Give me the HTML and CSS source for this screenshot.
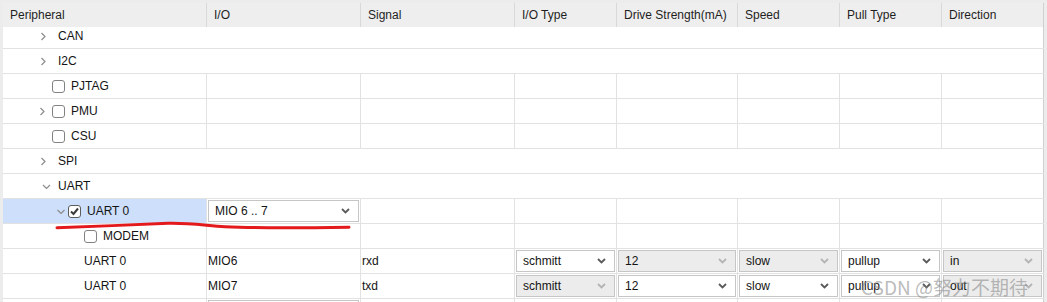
FILE: index.html
```html
<!DOCTYPE html>
<html lang="en">
<head>
  <meta charset="UTF-8">
  <title>Peripheral I/O</title>
  <link rel="stylesheet" href="styles.css">
</head>
<body>
  <div class="view">
    <div class="grid">
      <div class="row head">
        <div class="cell">Peripheral</div>
        <div class="cell">I/O</div>
        <div class="cell">Signal</div>
        <div class="cell">I/O Type</div>
        <div class="cell">Drive Strength(mA)</div>
        <div class="cell">Speed</div>
        <div class="cell">Pull Type</div>
        <div class="cell">Direction</div>
      </div>

      <div class="body">
        <div class="scroll">
          <div class="row group">
            <div class="cell tree l1"><span class="tw"><svg viewBox="0 0 13 13"><polyline class="chev" points="2.5,3 6,6.5 2.5,10"/></svg></span><span class="lbl gap">CAN</span></div>
          </div>
          <div class="row group">
            <div class="cell tree l1"><span class="tw"><svg viewBox="0 0 13 13"><polyline class="chev" points="2.5,3 6,6.5 2.5,10"/></svg></span><span class="lbl gap">I2C</span></div>
          </div>
          <div class="row">
            <div class="cell tree l1"><span class="tw"></span><span class="cb"></span><span class="lbl">PJTAG</span></div>
            <div class="cell"></div><div class="cell"></div><div class="cell"></div>
            <div class="cell"></div><div class="cell"></div><div class="cell"></div><div class="cell"></div>
          </div>
          <div class="row">
            <div class="cell tree l1"><span class="tw"><svg viewBox="0 0 13 13"><polyline class="chev" points="1.5,3 5,6.5 1.5,10"/></svg></span><span class="cb"></span><span class="lbl">PMU</span></div>
            <div class="cell"></div><div class="cell"></div><div class="cell"></div>
            <div class="cell"></div><div class="cell"></div><div class="cell"></div><div class="cell"></div>
          </div>
          <div class="row">
            <div class="cell tree l1"><span class="tw"></span><span class="cb"></span><span class="lbl">CSU</span></div>
            <div class="cell"></div><div class="cell"></div><div class="cell"></div>
            <div class="cell"></div><div class="cell"></div><div class="cell"></div><div class="cell"></div>
          </div>
          <div class="row group">
            <div class="cell tree l1"><span class="tw"><svg viewBox="0 0 13 13"><polyline class="chev" points="2.5,3 6,6.5 2.5,10"/></svg></span><span class="lbl gap">SPI</span></div>
          </div>
          <div class="row group">
            <div class="cell tree l1"><span class="tw"><svg viewBox="0 0 13 13"><polyline class="chev" points="4,5 7.5,8.5 11,5"/></svg></span><span class="lbl gap">UART</span></div>
          </div>
          <div class="row">
            <div class="cell tree l2 sel"><span class="tw"><svg viewBox="0 0 13 13"><polyline class="chev" points="2.5,5 6,8.5 9.5,5"/></svg></span><span class="cb on"><svg viewBox="0 0 11 11"><polyline points="2,5.5 4.5,8 9,2.5"/></svg></span><span class="lbl">UART 0</span></div>
            <div class="cell fill"><div class="dd"><span>MIO 6 .. 7</span><svg viewBox="0 0 9 6"><polyline points="1,1 4.5,4.5 8,1"/></svg></div></div>
            <div class="cell"></div><div class="cell"></div>
            <div class="cell"></div><div class="cell"></div><div class="cell"></div><div class="cell"></div>
          </div>
          <div class="row">
            <div class="cell tree l3"><span class="tw"></span><span class="cb"></span><span class="lbl">MODEM</span></div>
            <div class="cell"></div><div class="cell"></div><div class="cell"></div>
            <div class="cell"></div><div class="cell"></div><div class="cell"></div><div class="cell"></div>
          </div>
          <div class="row">
            <div class="cell leaf">UART 0</div>
            <div class="cell text">MIO6</div>
            <div class="cell text">rxd</div>
            <div class="cell fill"><div class="dd"><span>schmitt</span><svg viewBox="0 0 9 6"><polyline points="1,1 4.5,4.5 8,1"/></svg></div></div>
            <div class="cell fill"><div class="dd off"><span>12</span><svg viewBox="0 0 9 6"><polyline points="1,1 4.5,4.5 8,1"/></svg></div></div>
            <div class="cell fill"><div class="dd off"><span>slow</span><svg viewBox="0 0 9 6"><polyline points="1,1 4.5,4.5 8,1"/></svg></div></div>
            <div class="cell fill"><div class="dd"><span>pullup</span><svg viewBox="0 0 9 6"><polyline points="1,1 4.5,4.5 8,1"/></svg></div></div>
            <div class="cell fill"><div class="dd off"><span>in</span><svg viewBox="0 0 9 6"><polyline points="1,1 4.5,4.5 8,1"/></svg></div></div>
          </div>
          <div class="row">
            <div class="cell leaf">UART 0</div>
            <div class="cell text">MIO7</div>
            <div class="cell text">txd</div>
            <div class="cell fill"><div class="dd off"><span>schmitt</span><svg viewBox="0 0 9 6"><polyline points="1,1 4.5,4.5 8,1"/></svg></div></div>
            <div class="cell fill"><div class="dd"><span>12</span><svg viewBox="0 0 9 6"><polyline points="1,1 4.5,4.5 8,1"/></svg></div></div>
            <div class="cell fill"><div class="dd"><span>slow</span><svg viewBox="0 0 9 6"><polyline points="1,1 4.5,4.5 8,1"/></svg></div></div>
            <div class="cell fill"><div class="dd"><span>pullup</span><svg viewBox="0 0 9 6"><polyline points="1,1 4.5,4.5 8,1"/></svg></div></div>
            <div class="cell fill"><div class="dd off"><span>out</span><svg viewBox="0 0 9 6"><polyline points="1,1 4.5,4.5 8,1"/></svg></div></div>
          </div>
          <div class="row">
            <div class="cell"></div>
            <div class="cell fill"><div class="dd"><span></span><svg viewBox="0 0 9 6"><polyline points="1,1 4.5,4.5 8,1"/></svg></div></div>
            <div class="cell"></div><div class="cell"></div>
            <div class="cell"></div><div class="cell"></div><div class="cell"></div><div class="cell"></div>
          </div>
        </div>
      </div>
    </div>

    <!-- hand-drawn underline -->
    <svg class="mark" viewBox="0 0 1047 302">
      <path d="M57 224.8 C 90 223.8, 135 221.5, 168 220.3 C 190 219.8, 205 222.5, 225 223.8 C 260 225.3, 300 225, 349 224.2"/>
    </svg>

    <div class="wm">CSDN @努力不期待</div>
  </div>
</body>
</html>
```

FILE: styles.css
```css
html, body {
  margin: 0;
  height: 302px;
  overflow: hidden;
}

body {
  background-color: #ececec;
  font-family: 'Liberation Sans', Arial, sans-serif;
  font-size: 12px;
  color: #141414;
}

.view {
  position: relative;
  width: 1047px;
  height: 302px;
}

.grid {
  margin: 3px 0 0 3px;
  width: 1041px;
  background-color: #fff;
}

.row {
  display: grid;
  grid-template-columns: 204px 154px 154px 102px 121px 102px 102px 102px;
  height: 25px;
  box-sizing: border-box;
  border-bottom: 1px solid #e2e2e2;
}

.cell {
  box-sizing: border-box;
  border-right: 1px solid #e2e2e2;
  line-height: 24px;
  white-space: nowrap;
  overflow: hidden;
}

/* header */
.head {
  height: 24px;
  border-bottom: none;
  background-color: #eeeeee;
}

.head .cell {
  padding-left: 7px;
  border-right-color: #d9d9d9;
  color: #1e1e1e;
}

.head .cell:last-child {
  border-right-color: #c8c8c8;
}

/* body, scrolled a few pixels */
.body {
  height: 275px;
  overflow: hidden;
}

.scroll {
  margin-top: -3px;
}

.group .cell {
  grid-column: 1 / -1;
}

.row .cell:last-child {
  border-right-color: #d0d0d0;
}

/* tree column */
.tree {
  display: flex;
  align-items: center;
}

.l1 { padding-left: 36px; }
.l2 { padding-left: 52px; }
.l3 { padding-left: 68px; }

.leaf { padding-left: 81px; }

.text { padding-left: 1px; }

.sel {
  background-color: #cddffa;
}

.tw {
  width: 13px;
  height: 13px;
  flex: none;
}

.tw svg {
  display: block;
  width: 13px;
  height: 13px;
}

.chev {
  fill: none;
  stroke: #8c8c8c;
  stroke-width: 1.2;
}

.cb {
  width: 13px;
  height: 13px;
  box-sizing: border-box;
  flex: none;
  border: 1px solid #828282;
  border-radius: 3px;
  background-color: #fff;
  margin-right: 6px;
}

.cb.on {
  border-color: #5c5c5c;
}

.cb svg {
  display: block;
  width: 11px;
  height: 11px;
}

.cb svg polyline {
  fill: none;
  stroke: #3c3c3c;
  stroke-width: 2;
}

.gap {
  margin-left: 6px;
}

/* dropdowns */
.fill {
  padding: 1px;
}

.dd {
  display: flex;
  align-items: center;
  justify-content: space-between;
  box-sizing: border-box;
  height: 22px;
  border: 1px solid #c6c6c6;
  background-color: #fff;
  padding: 0 8px 0 6px;
  line-height: 20px;
}

.dd svg {
  width: 9px;
  height: 6px;
  flex: none;
}

.dd svg polyline {
  fill: none;
  stroke: #5a5a5a;
  stroke-width: 1.8;
}

.dd.off {
  background-color: #ececec;
}

.dd.off svg polyline {
  stroke: #b4b4b4;
}

/* overlays */
.mark {
  position: absolute;
  left: 0;
  top: 0;
  width: 1047px;
  height: 302px;
  pointer-events: none;
}

.mark path {
  fill: none;
  stroke: #e3191c;
  stroke-width: 3;
  stroke-linecap: round;
}

.wm {
  position: absolute;
  left: 861px;
  top: 271px;
  font-family: 'Noto Sans CJK SC', sans-serif;
  font-size: 19px;
  line-height: 26px;
  color: rgba(130, 130, 130, 0.55);
  white-space: nowrap;
  pointer-events: none;
}
```
